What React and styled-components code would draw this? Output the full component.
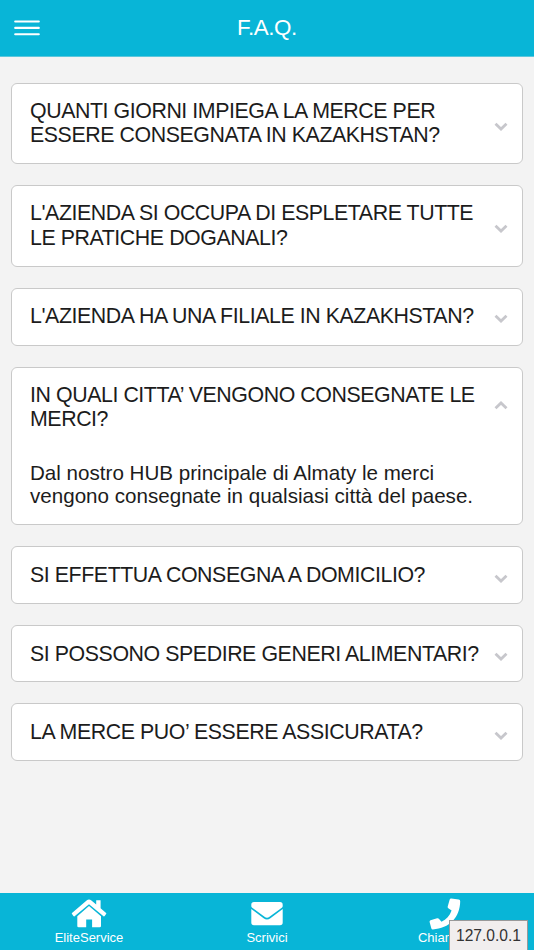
import React, { useState } from 'react';
import styled, { createGlobalStyle } from 'styled-components';

const GlobalStyle = createGlobalStyle`
  * { box-sizing: border-box; }
  body { margin: 0; background: #f3f3f3; font-family: "Liberation Sans", Arial, sans-serif; }
  button { font: inherit; color: inherit; border: 0; background: none; padding: 0; }
`;

const Page = styled.div`
  display: flex;
  flex-direction: column;
  height: 950px;
  width: 534px;
  overflow: hidden;
  position: relative;
  color: #1c1c1c;
`;

const Header = styled.header`
  display: grid;
  grid-template-columns: 54px 1fr 54px;
  align-items: center;
  flex: none;
  height: 57px;
  background: #08b5d7;
  border-bottom: 1px solid #5bc7dc;
  color: #fff;
`;

const MenuButton = styled.button`
  display: flex;
  padding: 0 0 1px 14px;
`;

const Title = styled.h1`
  margin: 0;
  text-align: center;
  font-size: 22.4px;
  font-weight: 400;
  line-height: 26px;
  letter-spacing: -0.4px;
`;

const List = styled.main`
  flex: 1;
  display: flex;
  flex-direction: column;
  gap: 21px;
  padding: 26px 11px 0;
`;

const Card = styled.section`
  flex: none;
  height: ${(p) => p.$height}px;
  border: 1.4px solid #c9c9c9;
  border-radius: 6px;
  background: #fff;
`;

const Question = styled.button`
  display: flex;
  justify-content: space-between;
  width: 100%;
  padding: ${(p) => p.$pad || 14.5}px 14px 0 18px;
  text-align: left;
  font-size: 21.35px;
  line-height: ${(p) => p.$leading || 24.5}px;
  letter-spacing: -0.43px;
  white-space: pre;
`;

const Chevron = styled.svg`
  flex: none;
  margin-top: ${(p) => p.$top}px;
  transform: ${(p) => (p.$open ? 'rotate(180deg)' : 'none')};
`;

const Answer = styled.p`
  margin: 0;
  padding: 29px 18px 0;
  font-size: 20.6px;
  line-height: 23.5px;
  white-space: pre;
`;

const TabBar = styled.nav`
  flex: none;
  display: grid;
  grid-template-columns: repeat(3, 1fr);
  height: 57px;
  background: #08b5d7;
  color: #fff;
`;

const Tab = styled.button`
  display: flex;
  flex-direction: column;
  align-items: center;
  padding-top: 5px;
  font-size: 13px;
  line-height: 15px;
`;

const TabIcon = styled.svg`
  display: block;
`;

const AddressTip = styled.div`
  position: absolute;
  right: 6px;
  bottom: -1px;
  width: 79px;
  height: 31px;
  padding-top: 6px;
  border: 1px solid #999;
  background: #f1eeee;
  color: #333;
  text-align: center;
  font-size: 15.6px;
  line-height: 18px;
`;

const faqs = [
  { q: 'QUANTI GIORNI IMPIEGA LA MERCE PER\nESSERE CONSEGNATA IN KAZAKHSTAN?', height: 81, arrow: 23 },
  { q: "L'AZIENDA SI OCCUPA DI ESPLETARE TUTTE\nLE PRATICHE DOGANALI?", height: 82, arrow: 23, leading: 25.5 },
  { q: "L'AZIENDA HA UNA FILIALE IN KAZAKHSTAN?", height: 58, arrow: 10 },
  {
    q: 'IN QUALI CITTA’ VENGONO CONSEGNATE LE\nMERCI?',
    a: 'Dal nostro HUB principale di Almaty le merci\nvengono consegnate in qualsiasi città del paese.',
    height: 158,
    arrow: 17,
  },
  { q: 'SI EFFETTUA CONSEGNA A DOMICILIO?', height: 58, arrow: 11, pad: 15.5 },
  { q: 'SI POSSONO SPEDIRE GENERI ALIMENTARI?', height: 57.4, arrow: 10.5, pad: 15.5 },
  { q: 'LA MERCE PUO’ ESSERE ASSICURATA?', height: 58, arrow: 11, pad: 15.5 },
];

function HomeIcon() {
  return (
    <TabIcon width="36" height="32" viewBox="0 0 36 32" fill="#fff">
      <path d="M18 8 L30 18.2 V27.9 Q30 29.2 28.7 29.2 H21.1 V21.6 H15.2 V29.2 H7.6 Q6.3 29.2 6.3 27.9 V18.2 Z" />
      <path d="M1 15 L15.6 2.4 Q18 .8 20.4 2.4 L25.2 6.5 V2.2 H29.6 V10.2 L35.1 15 Q35.6 15.5 35.1 16.1 L33.7 18 Q33.1 18.7 32.5 18.2 L18 6.2 L3.6 18.2 Q3 18.7 2.4 18 L1 16.1 Q.5 15.5 1 15 Z" />
    </TabIcon>
  );
}

function MailIcon() {
  return (
    <TabIcon width="32" height="32" viewBox="0 0 32 32" fill="#fff">
      <path d="M3 4 H29 Q31.7 4 31.7 6.7 V8.2 Q31.7 9 30.8 9.7 L18.5 18.8 Q16 20.6 13.5 18.8 L1.2 9.7 Q.3 9 .3 8.2 V6.7 Q.3 4 3 4 Z" />
      <path d="M.3 11.1 L12.6 20.2 Q16 22.6 19.4 20.2 L31.7 11.1 V24.5 Q31.7 27.3 29 27.3 H3 Q.3 27.3 .3 24.5 Z" />
    </TabIcon>
  );
}

function PhoneIcon() {
  return (
    <TabIcon width="32" height="32" viewBox="0 0 32 32" fill="#fff">
      <path d="M22.2 .4 L29.8 1.5 Q31.2 1.8 31.2 3.2 C31 19.5 20.5 30.2 3.8 31.4 Q2.6 31.4 2.3 30.2 L.6 24 Q.3 22.8 1.5 22.3 L8.1 20.2 Q9.2 19.9 9.9 20.8 L12.5 23.7 C17.5 21.2 20.6 17.8 22.6 12.5 L19.3 10.2 Q18.4 9.5 18.7 8.4 L20.7 1.5 Q21 .3 22.2 .4 Z" />
    </TabIcon>
  );
}

const tabs = [
  { label: 'EliteService', Icon: HomeIcon },
  { label: 'Scrivici', Icon: MailIcon },
  { label: 'Chiamaci', Icon: PhoneIcon },
];

export default function App() {
  const [open, setOpen] = useState(3);
  return (
    <>
      <GlobalStyle />
      <Page>
        <Header>
          <MenuButton aria-label="Menu">
            <svg width="26" height="18" viewBox="0 0 26 18" stroke="#fff" strokeWidth="2.1" strokeLinecap="round">
              <path d="M1.2 2.5H24.8M1.2 8.9H24.8M1.2 15.2H24.8" />
            </svg>
          </MenuButton>
          <Title>F.A.Q.</Title>
        </Header>
        <List>
          {faqs.map((item, i) => (
            <Card key={item.q} $height={item.height}>
              <Question $leading={item.leading} $pad={item.pad} onClick={() => setOpen(open === i ? -1 : i)}>
                <span>{item.q}</span>
                <Chevron $top={item.arrow} $open={open === i} width="14" height="10" viewBox="0 0 14 10" fill="none" stroke="#c7c7cc" strokeWidth="2.8">
                  <path d="M1.5 1.8 L7 7.1 L12.5 1.8" />
                </Chevron>
              </Question>
              {open === i && item.a && <Answer>{item.a}</Answer>}
            </Card>
          ))}
        </List>
        <TabBar>
          {tabs.map(({ label, Icon }) => (
            <Tab key={label}>
              <Icon />
              {label}
            </Tab>
          ))}
        </TabBar>
        <AddressTip>127.0.0.1</AddressTip>
      </Page>
    </>
  );
}
